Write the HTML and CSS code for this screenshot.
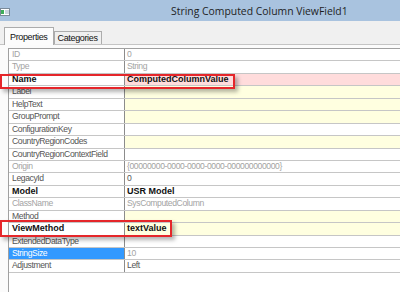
FILE: index.html
```html
<!DOCTYPE html>
<html lang="en">
  <head>
    <meta charset="UTF-8" />
    <title>String Computed Column ViewField1</title>
    <link rel="stylesheet" href="styles.css">
  </head>
  <body>
    <div class="window">
      <div class="title-bar">
        <svg class="app-icon" width="10" height="8" viewBox="0 0 10 8">
          <rect x="0.5" y="0.5" width="9" height="7" fill="#ffffff" stroke="#7a8a9a" />
          <rect x="1" y="2" width="3" height="4" fill="#3fae5a" />
          <rect x="5" y="2" width="4" height="4" fill="#c9d3dd" />
        </svg>
        <span class="title-text">String Computed Column ViewField1</span>
      </div>
      <div class="tabs">
        <div class="tab tab-active">Properties</div>
        <div class="tab">Categories</div>
      </div>
      <div class="panel">
        <div class="grid">
          <div class="row"><div class="key ro">ID</div><div class="val ro">0</div></div>
          <div class="row"><div class="key ro">Type</div><div class="val ro">String</div></div>
          <div class="row"><div class="key bold">Name</div><div class="val bold pink">ComputedColumnValue</div></div>
          <div class="row"><div class="key">Label</div><div class="val yellow"></div></div>
          <div class="row"><div class="key">HelpText</div><div class="val yellow"></div></div>
          <div class="row"><div class="key">GroupPrompt</div><div class="val yellow"></div></div>
          <div class="row"><div class="key">ConfigurationKey</div><div class="val"></div></div>
          <div class="row"><div class="key">CountryRegionCodes</div><div class="val yellow"></div></div>
          <div class="row"><div class="key">CountryRegionContextField</div><div class="val"></div></div>
          <div class="row"><div class="key ro">Origin</div><div class="val ro">{00000000-0000-0000-0000-000000000000}</div></div>
          <div class="row"><div class="key">LegacyId</div><div class="val">0</div></div>
          <div class="row"><div class="key bold">Model</div><div class="val bold">USR Model</div></div>
          <div class="row"><div class="key ro">ClassName</div><div class="val ro">SysComputedColumn</div></div>
          <div class="row"><div class="key">Method</div><div class="val yellow"></div></div>
          <div class="row"><div class="key bold">ViewMethod</div><div class="val bold yellow">textValue</div></div>
          <div class="row"><div class="key">ExtendedDataType</div><div class="val"></div></div>
          <div class="row"><div class="key selected">StringSize</div><div class="val ro">10</div></div>
          <div class="row"><div class="key">Adjustment</div><div class="val">Left</div></div>
        </div>
      </div>
    </div>
    <div class="callout callout-name"></div>
    <div class="callout callout-view"></div>
  </body>
</html>
```

FILE: styles.css
```css
* {
  margin: 0;
  padding: 0;
  box-sizing: border-box;
}
body {
  position: relative;
  width: 400px;
  height: 292px;
  overflow: hidden;
  background-color: #f0f0f0;
  font-family: "Liberation Sans", Arial, sans-serif;
}
.window {
  display: flex;
  flex-direction: column;
  height: 100%;
}
.title-bar {
  display: flex;
  align-items: center;
  flex: 0 0 21px;
  background-color: #a9c3df;
}
.app-icon {
  margin-top: 3px;
}
.title-text {
  margin-left: 161px;
  font-family: "Open Sans", "Liberation Sans", sans-serif;
  font-size: 10.4px;
  color: #1e1e1e;
}
.tabs {
  display: flex;
  align-items: flex-end;
  flex: 0 0 24px;
  padding-left: 4px;
  border-bottom: 1px solid #c4c4c4;
}
.tab {
  height: 13px;
  padding: 0 3px;
  border: 1px solid #acacac;
  border-bottom: none;
  background-color: #f0f0f0;
  font-size: 9px;
  letter-spacing: -0.35px;
  line-height: 12px;
  color: #111;
}
.tab-active {
  height: 18px;
  margin-bottom: -1px;
  padding: 3px 5px 0 5px;
  background-color: #fcfcfc;
}
.panel {
  flex: 1;
  padding: 3px 0 0 8px;
  background-color: #fbfbfb;
}
.grid {
  height: 100%;
  border-top: 1px solid #a0a0a0;
  border-left: 1px solid #a0a0a0;
  background-color: #ffffff;
  font-size: 8.6px;
  letter-spacing: -0.4px;
}
.row {
  display: flex;
  height: 12.44px;
  border-bottom: 1px solid #c6c6c6;
}
.key {
  flex: 0 0 116px;
  padding-left: 3px;
  border-right: 1px solid #8c8c8c;
  line-height: 11px;
  color: #555555;
  white-space: nowrap;
  overflow: hidden;
}
.val {
  flex: 1;
  padding-left: 2px;
  line-height: 11px;
  color: #555555;
  white-space: nowrap;
}
.ro {
  color: #a3a3a3;
}
.bold {
  font-size: 9px;
  font-weight: bold;
  letter-spacing: 0;
  color: #111111;
}
.pink {
  background-color: #ffdcdc;
}
.yellow {
  background-color: #ffffe0;
}
.selected {
  background-color: #3399ff;
  color: #ffffff;
}
.callout {
  position: absolute;
  left: 0;
  border: 2px solid #e5262a;
  box-shadow: 3px 3px 4px rgba(0, 0, 0, 0.3);
}
.callout-name {
  top: 74px;
  width: 235px;
  height: 15px;
}
.callout-view {
  top: 220px;
  width: 172px;
  height: 17px;
}
```
